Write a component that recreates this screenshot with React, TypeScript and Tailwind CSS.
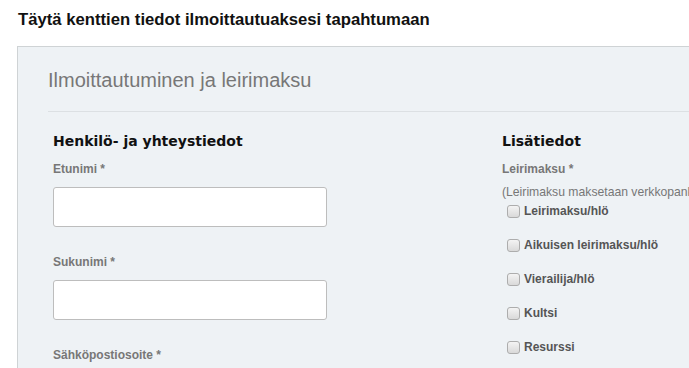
import React from "react";

const Checkbox = ({ label }: { label: string }) => (
  <label className="flex items-center h-[16px] pl-[5px]">
    <span className="w-[13px] h-[13px] rounded-[3px] border border-[#adadad] bg-gradient-to-b from-[#f4f4f4] to-[#d9d9d9] shrink-0" />
    <span className="ml-[4px] text-[12px] leading-[16px] font-bold text-[#555]">{label}</span>
  </label>
);

const Field = ({ label, first }: { label: string; first?: boolean }) => (
  <div className={first ? "mt-[11px]" : "mt-[27px]"}>
    <div className="text-[12px] leading-[16px] font-bold text-[#777]">{label}</div>
    <div className="mt-[10px] w-[274px] h-[40px] bg-white border border-[#bdbdbd] rounded-[3px]" />
  </div>
);

export default function App() {
  return (
    <div
      className="w-[689px] h-[368px] overflow-hidden bg-white"
      style={{ fontFamily: '"Liberation Sans", Arial, sans-serif' }}
    >
      <h1 className="pt-[10px] pl-[18px] text-[16.7px] leading-[20px] font-bold text-[#111] whitespace-nowrap">
        Täytä kenttien tiedot ilmoittautuaksesi tapahtumaan
      </h1>
      <div className="mt-[16px] ml-[17px] w-[760px] h-[400px] border border-[#cfd3d5] bg-[#eef2f5] pl-[30px] pt-[21px]">
        <div className="text-[20px] leading-[24px] text-[#777] whitespace-nowrap">
          Ilmoittautuminen ja leirimaksu
        </div>
        <div className="mt-[19px] h-px bg-[#dce0e3]" />
        <div className="flex pl-[5px] pt-[20px]">
          <div className="w-[449px] shrink-0">
            <h2
              className="text-[14px] leading-[18px] font-bold text-[#111] whitespace-nowrap"
              style={{ fontFamily: '"DejaVu Sans", Verdana, sans-serif' }}
            >
              Henkilö- ja yhteystiedot
            </h2>
            <Field label="Etunimi *" first />
            <Field label="Sukunimi *" />
            <div className="mt-[27px] text-[12px] leading-[16px] font-bold text-[#777]">
              Sähköpostiosoite *
            </div>
          </div>
          <div className="flex-1 min-w-0">
            <h2
              className="text-[14px] leading-[18px] font-bold text-[#111] whitespace-nowrap"
              style={{ fontFamily: '"DejaVu Sans", Verdana, sans-serif' }}
            >
              Lisätiedot
            </h2>
            <div className="mt-[11px] text-[12px] leading-[16px] font-bold text-[#777]">
              Leirimaksu *
            </div>
            <div className="mt-[7px] text-[12.2px] leading-[16px] text-[#777] whitespace-nowrap">
              (Leirimaksu maksetaan verkkopankissa ilmoittautumisen yhteydessä)
            </div>
            <div className="mt-[3px] flex flex-col gap-[18px]">
              <Checkbox label="Leirimaksu/hlö" />
              <Checkbox label="Aikuisen leirimaksu/hlö" />
              <Checkbox label="Vierailija/hlö" />
              <Checkbox label="Kultsi" />
              <Checkbox label="Resurssi" />
            </div>
          </div>
        </div>
      </div>
    </div>
  );
}
